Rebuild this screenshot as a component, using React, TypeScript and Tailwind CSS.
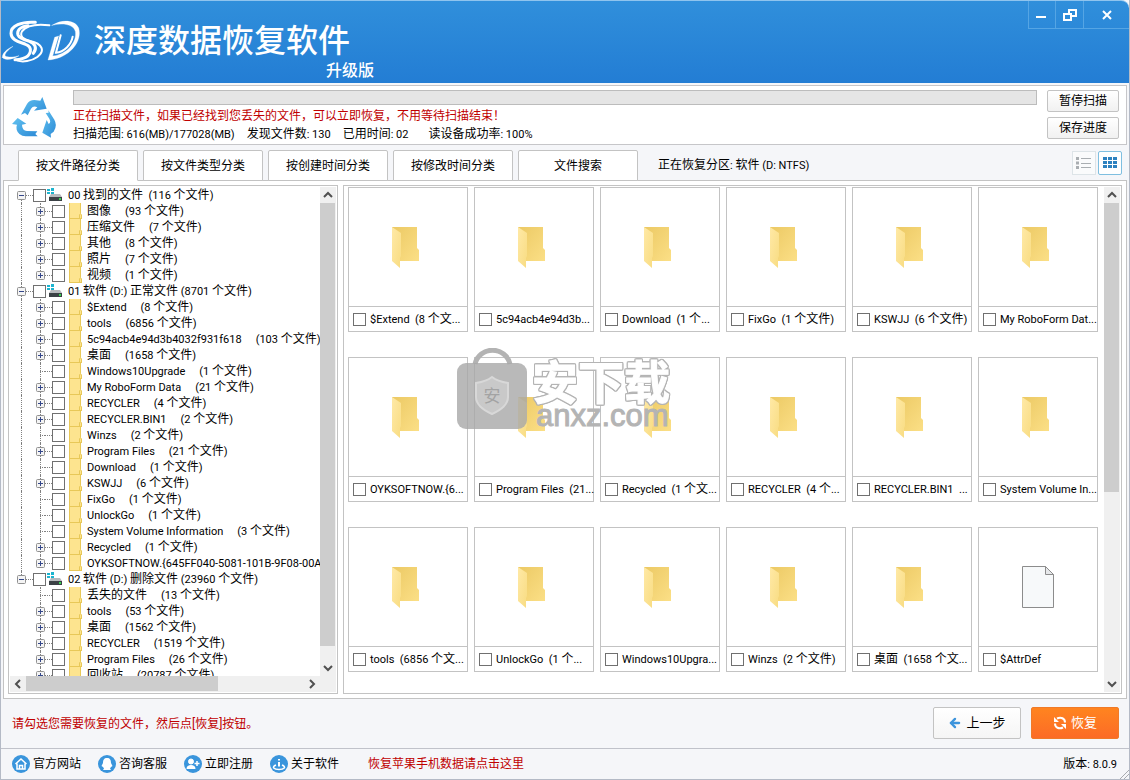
import type { ReactNode } from "react"
import { ArrowLeft } from "lucide-react"

type Folder = { name: string; count?: number; leaf?: boolean }
type Volume = { label: string; folders: Folder[] }

const volumes: Volume[] = [
  {
    label: "00 找到的文件  (116 个文件)",
    folders: [
      { name: "图像", count: 93 },
      { name: "压缩文件", count: 7 },
      { name: "其他", count: 8 },
      { name: "照片", count: 7 },
      { name: "视频", count: 1 },
    ],
  },
  {
    label: "01 软件 (D:) 正常文件 (8701 个文件)",
    folders: [
      { name: "$Extend", count: 8 },
      { name: "tools", count: 6856 },
      { name: "5c94acb4e94d3b4032f931f618", count: 103 },
      { name: "桌面", count: 1658 },
      { name: "Windows10Upgrade", count: 1, leaf: true },
      { name: "My RoboForm Data", count: 21 },
      { name: "RECYCLER", count: 4 },
      { name: "RECYCLER.BIN1", count: 2 },
      { name: "Winzs", count: 2, leaf: true },
      { name: "Program Files", count: 21 },
      { name: "Download", count: 1, leaf: true },
      { name: "KSWJJ", count: 6 },
      { name: "FixGo", count: 1, leaf: true },
      { name: "UnlockGo", count: 1, leaf: true },
      { name: "System Volume Information", count: 3, leaf: true },
      { name: "Recycled", count: 1 },
      { name: "OYKSOFTNOW.{645FF040-5081-101B-9F08-00A" },
    ],
  },
  {
    label: "02 软件 (D:) 删除文件 (23960 个文件)",
    folders: [
      { name: "丢失的文件", count: 13, leaf: true },
      { name: "tools", count: 53 },
      { name: "桌面", count: 1562 },
      { name: "RECYCLER", count: 1519 },
      { name: "Program Files", count: 26 },
      { name: "回收站", count: 20787 },
    ],
  },
]

const cards = [
  "$Extend  (8 个文...",
  "5c94acb4e94d3b...",
  "Download  (1 个...",
  "FixGo  (1 个文件)",
  "KSWJJ  (6 个文件)",
  "My RoboForm Dat...",
  "OYKSOFTNOW.{6...",
  "Program Files  (21...",
  "Recycled  (1 个文...",
  "RECYCLER  (4 个...",
  "RECYCLER.BIN1  ...",
  "System Volume In...",
  "tools  (6856 个文...",
  "UnlockGo  (1 个...",
  "Windows10Upgra...",
  "Winzs  (2 个文件)",
  "桌面  (1658 个文...",
  "$AttrDef",
]

const tabs = ["按文件路径分类", "按文件类型分类", "按创建时间分类", "按修改时间分类", "文件搜索"]

// Latin runs are set one pixel smaller than the Chinese around them
const Mixed = ({ text }: { text: string }) => (
  <>
    {text.split(/([\x20-\x7e]+)/).map((part, i) =>
      i % 2 ? (
        <span key={i} className="text-[11px]">
          {part}
        </span>
      ) : (
        part
      )
    )}
  </>
)

const Logo = () => (
  <svg viewBox="3 27 240 132" className="h-11 w-20 shrink-0" fill="none" stroke="#fff" strokeLinecap="round">
    <path d="M106 37C64 34 32 48 33 70c1 22 28 26 44 33 22 9 18 34-8 42-8 3-18 4-24 4" strokeWidth="9" />
    <path d="M148 46c-34-4-68 0-82 18-8 16 4 24 24 29 38 8 46 30 22 48-18 13-44 16-60 11" strokeWidth="6" />
    <path d="M84 47c-24 2-34 16-30 28 4 11 20 15 34 19 18 6 24 22 12 36" strokeWidth="9" />
    <path d="M7 142c0-12 12-24 32-33-14 10-24 20-24 28 10 7 30 4 42 0-16 11-44 16-50 5Z" fill="#fff" strokeWidth="1" />
    <path
      d="M156 46c28-18 68-18 80 8 12 42-30 92-92 96l20-68 12-4-18 60c44-4 74-44 68-74-6-22-38-26-70-18Z"
      fill="#fff"
      strokeWidth="1"
    />
    <path d="m182 76-14 52c24-2 46-24 50-48" strokeWidth="6" />
  </svg>
)

const RecycleIcon = () => (
  <svg viewBox="21 30 132 126" className="h-[42px] w-11">
    <defs>
      <linearGradient id="recycle" x1="0" y1="0" x2="1" y2="1">
        <stop offset="0" stopColor="#62c2f0" />
        <stop offset="1" stopColor="#2c8ad6" />
      </linearGradient>
    </defs>
    <g fill="url(#recycle)">
      <path d="M48 86 66 54q7-12 22-12l18 2 6-11 13 35-38 6 10-10q-12-6-19 4L68 88l-8-7Z" />
      <path d="m130 73 18 28q10 18-2 36l-9 7 1 11-26-15 13-38 6 12q8-4 2-16l-11-17 9-1Z" />
      <path d="M98 151H62q-22-2-27-20-2-8 1-15l-15-2 17-18 26 17-13 3q0 18 15 19l31 1-6 8Z" />
    </g>
  </svg>
)

const FolderIcon = () => (
  <svg viewBox="0 0 48 48" className="size-12">
    <defs>
      <linearGradient id="folder-back" x1="0" y1="0" x2="1" y2="1">
        <stop offset="0" stopColor="#ecc964" />
        <stop offset="1" stopColor="#fbdf86" />
      </linearGradient>
      <linearGradient id="folder-flap" x1="0" y1="0" x2="1" y2="1">
        <stop offset="0" stopColor="#ffe9a6" />
        <stop offset="1" stopColor="#f8dc82" />
      </linearGradient>
    </defs>
    <path d="M8 4h25v21l2 2v11H8Z" fill="url(#folder-back)" />
    <path d="m8 4 9 6v23l-1 2v10l-8-7Z" fill="url(#folder-flap)" />
  </svg>
)

const FileIcon = () => (
  <svg viewBox="0 0 48 48" className="size-12" stroke="#8c8c8c">
    <path d="M8.500 3.500h23l8 8v33h-31Z" fill="#f7f9fa" />
    <path d="M31.500 3.500v8h8Z" fill="#e6e8ea" />
  </svg>
)

const SmallFolder = () => (
  <svg viewBox="0 0 13 16" className="h-4 w-[13px] shrink-0">
    <path d="M0 0h11l1 10v6H0Z" fill="#fde48f" />
    <path d="M.500 0v16M11.500 0v10M10.500 16v-4l1-1.500 1 1.500v4M0 15.500h12" stroke="#e8c858" fill="none" />
  </svg>
)

const DriveIcon = () => (
  <svg viewBox="0 0 16 16" className="mx-px size-4 shrink-0">
    <path d="M0 2h3v2H0ZM4 1h3v3H4ZM0 5h3v2H0ZM4 5h3v3H4Z" fill="#1cb4cf" />
    <path d="M4 7h9l2 3H2Z" fill="#b7babd" />
    <path d="M2 10h13v4H2Z" fill="#3b4145" />
    <path d="M12 11h2v2h-2Z" fill="#39d353" />
  </svg>
)

const Check = () => (
  <input type="checkbox" className="size-[13px] shrink-0 appearance-none border border-[#707070] bg-white" />
)

const Expander = ({ open, leaf, line }: { open?: boolean; leaf?: boolean; line: string }) => (
  <span className="relative flex h-4 w-[9px] shrink-0 items-center">
    <span className={`absolute left-1 border-l border-dotted border-[#808080] ${line}`} />
    {leaf ? (
      <span className="ml-1 h-px w-[5px] border-t border-dotted border-[#808080]" />
    ) : (
      <svg viewBox="0 0 9 9" className="relative size-[9px]">
        <rect x=".5" y=".5" width="8" height="8" rx="1" fill="#f4f4f4" stroke="#919191" />
        <path d={open ? "M2 4.500h5" : "M2 4.500h5M4.500 2v5"} stroke="#34478a" />
      </svg>
    )}
  </span>
)

const Dots = () => <span className="h-px w-[7px] shrink-0 border-t border-dotted border-[#808080]" />

const Chevron = ({ d, label }: { d: string; label: string }) => (
  <button aria-label={label} className="flex size-4 shrink-0 items-center justify-center">
    <svg viewBox="0 0 10 10" className="size-[10px]" fill="none" stroke="#505050" strokeWidth="2">
      <path d={d} />
    </svg>
  </button>
)

const VerticalScroll = ({ thumb }: { thumb: string }) => (
  <div className="flex w-4 shrink-0 flex-col bg-[#f0f0f0]">
    <Chevron label="向上滚动" d="M1 7l4-4 4 4" />
    <div className="min-h-0 flex-1">
      <div className={`w-[15px] bg-[#cdcdcd] ${thumb}`} />
    </div>
    <Chevron label="向下滚动" d="M1 3l4 4 4-4" />
  </div>
)

const FileTree = () => (
  <div className="flex w-[330px] shrink-0 flex-col border border-[#c3c3c3] bg-white p-px">
    <div className="flex min-h-0 flex-1">
      <ul className="min-w-0 flex-1 overflow-hidden pl-[7px]">
        {volumes.map((volume, v) => {
          const last = v === volumes.length - 1
          return (
            <li key={volume.label}>
              <label className="flex h-4 items-center whitespace-pre">
                <Expander open line={v === 0 ? "top-2 bottom-0" : last ? "top-0 bottom-2" : "inset-y-0"} />
                <Dots />
                <Check />
                <DriveIcon />
                <span className="ml-1">
                  <Mixed text={volume.label} />
                </span>
              </label>
              <ul>
                {volume.folders.map((folder, f) => (
                  <li key={folder.name}>
                    <label className="flex h-4 items-center whitespace-pre">
                      <span className="mr-[10px] h-4 w-[9px] shrink-0 pl-1">
                        {!last && <span className="block h-4 w-px border-l border-dotted border-[#808080]" />}
                      </span>
                      <Expander
                        leaf={folder.leaf}
                        line={!last && f === volume.folders.length - 1 ? "top-0 bottom-2" : "inset-y-0"}
                      />
                      <Dots />
                      <Check />
                      <span className="mr-[5px] ml-1 flex shrink-0">
                        <SmallFolder />
                      </span>
                      <span>
                        <Mixed text={folder.name} />
                      </span>
                      {folder.count !== undefined && (
                        <span className="ml-[14px]">
                          <Mixed text={`(${folder.count} 个文件)`} />
                        </span>
                      )}
                    </label>
                  </li>
                ))}
              </ul>
            </li>
          )
        })}
      </ul>
      <VerticalScroll thumb="h-[97%]" />
    </div>
    <div className="flex h-4 shrink-0 bg-[#f0f0f0] pr-4">
      <Chevron label="向左滚动" d="M7 1L3 5l4 4" />
      <div className="flex flex-1">
        <div className="h-[15px] w-[69%] bg-[#cdcdcd]" />
      </div>
      <Chevron label="向右滚动" d="M3 1l4 4-4 4" />
    </div>
  </div>
)

const Watermark = () => (
  <div className="pointer-events-none absolute top-[162px] left-[113px] flex">
    <svg viewBox="0 0 70 82" className="h-[82px] w-[70px] shrink-0">
      <path d="M18 16a18 18 0 0 1 35 0" fill="none" stroke="#b3b3b3" strokeWidth="5" />
      <rect y="15" width="70" height="66" rx="9" fill="#a8a8a8" fillOpacity=".8" />
      <path d="M35 29c5 4 10 5 16 6v14c0 8-7 13-16 17-9-4-16-9-16-17V35c6-1 11-2 16-6Z" fill="#c9c9c9" stroke="#d8d8d8" strokeWidth="2" />
      <text x="35" y="54" textAnchor="middle" fontSize="17" fill="#a3a3a3">
        安
      </text>
    </svg>
    <div className="pt-3 pl-[5px]">
      <p className="h-[42px] text-[46px] leading-[46px] font-bold text-white [-webkit-text-stroke:1px_#fff] [filter:drop-shadow(1px_0_#b4b4b4)_drop-shadow(-1px_0_#b4b4b4)_drop-shadow(0_1px_#b4b4b4)_drop-shadow(0_-1px_#b4b4b4)]">
        安下载
      </p>
      <p className="pl-1 font-['Liberation_Sans',sans-serif] text-[31px] leading-[28px] text-[#b4b4b4] [-webkit-text-stroke:1px_#b4b4b4]">
        anxz.com
      </p>
    </div>
  </div>
)

const FileGrid = () => (
  <div className="relative flex min-w-0 flex-1 border border-[#c3c3c3] bg-white pr-px">
    <ul className="grid min-w-0 flex-1 auto-rows-min grid-cols-[repeat(auto-fill,120px)] gap-x-[6px] gap-y-[25px] overflow-hidden pt-px pl-1">
      {cards.map((card) => (
        <li key={card} className="h-[145px] border border-[#c3c3c3]">
          <label className="flex h-full flex-col">
            <span className="flex flex-1 items-center justify-center">
              {card === "$AttrDef" ? <FileIcon /> : <FolderIcon />}
            </span>
            <span className="flex h-[25px] items-center gap-1 border-t border-[#c3c3c3] pl-1">
              <Check />
              <span className="whitespace-pre">
                <Mixed text={card} />
              </span>
            </span>
          </label>
        </li>
      ))}
    </ul>
    <div className="flex py-px">
      <VerticalScroll thumb="h-[61%]" />
    </div>
    <Watermark />
  </div>
)

const FooterLink = ({ label, children }: { label: string; children: ReactNode }) => (
  <a href="#" className="flex items-center gap-[3px]">
    <svg viewBox="0 0 18 18" className="size-[18px]" fill="none" stroke="#fff">
      <circle cx="9" cy="9" r="9" fill="#3a95dc" stroke="none" />
      {children}
    </svg>
    {label}
  </a>
)

const smallButton =
  "h-[22px] w-[72px] rounded-xs border border-[#c3c3c3] bg-linear-to-b from-white to-[#f1f1f1] leading-5"

export default function App() {
  return (
    <div className="flex h-screen flex-col overflow-hidden border-x border-b border-[#b4bac6] bg-[#f5f6f9] font-[Roboto,'Noto_Sans_CJK_SC',sans-serif] text-[12px] leading-4 text-black">
      <header className="flex h-[83px] shrink-0 justify-between rounded-tr-lg border-t border-[#8fc4ee] bg-linear-to-b from-[#308fdb] to-[#237dd4] text-white">
        <div className="flex pt-[18px]">
          <Logo />
          <div className="ml-[13px]">
            <h1 className="text-[32px] leading-[44px] font-medium">深度数据恢复软件</h1>
            <p className="-mr-6 text-right text-[16px] leading-4 font-medium">升级版</p>
          </div>
        </div>
        <div className="flex h-7 border-b border-l border-[#55a5e4]">
          <button aria-label="最小化" className="w-[27px] border-r border-[#55a5e4] pl-[7px]">
            <span className="mt-1 block h-[2px] w-[10px] bg-white" />
          </button>
          <button aria-label="还原" className="flex w-7 items-center justify-center border-r border-[#55a5e4]">
            <svg viewBox="0 0 14 12" className="h-3 w-[14px]" fill="none" stroke="#fff" strokeWidth="2">
              <path d="M6 5V1h7v6H9M1 5h7v6H1Z" />
            </svg>
          </button>
          <button aria-label="关闭" className="flex w-[45px] items-center justify-center">
            <svg viewBox="0 0 10 10" className="size-[10px]" stroke="#fff" strokeWidth="2">
              <path d="M1 1l8 8M9 1L1 9" />
            </svg>
          </button>
        </div>
      </header>

      <section className="mx-[2px] mt-[2px] flex h-[60px] shrink-0 border border-[#c6c6c9] bg-white pr-[7px] pl-2">
        <div className="w-[61px] shrink-0 pt-[10px]">
          <RecycleIcon />
        </div>
        <div className="min-w-0 flex-1 pt-1">
          <div role="progressbar" aria-label="扫描进度" className="h-[15px] border border-[#bcbcbc] bg-[#e5e5e5]" />
          <p className="mt-[2px] leading-[18px] text-[#c00000]">
            正在扫描文件，如果已经找到您丢失的文件，可以立即恢复，不用等待扫描结束！
          </p>
          <p className="flex gap-3 leading-[18px]">
            <span>
              <Mixed text="扫描范围: 616(MB)/177028(MB)" />
            </span>
            <span>
              <Mixed text="发现文件数: 130" />
            </span>
            <span>
              <Mixed text="已用时间: 02" />
            </span>
            <span className="ml-2">
              <Mixed text="读设备成功率: 100%" />
            </span>
          </p>
        </div>
        <div className="ml-[10px] flex flex-col gap-[5px] pt-1">
          <button className={smallButton}>暂停扫描</button>
          <button className={smallButton}>保存进度</button>
        </div>
      </section>

      <nav className="z-10 mx-[2px] mt-[5px] flex h-[31px] shrink-0 gap-[5px] pl-[15px]">
        {tabs.map((tab, i) => (
          <button
            key={tab}
            className={`w-[120px] rounded-t-xs border border-[#c3c3c3] bg-white ${i === 0 ? "border-b-white" : ""}`}
          >
            {tab}
          </button>
        ))}
        <p className="ml-[15px] leading-[31px]">
          <Mixed text="正在恢复分区: 软件 (D: NTFS)" />
        </p>
        <div className="mt-px mr-[5px] ml-auto flex gap-[2px]">
          <button aria-label="列表视图" className="flex size-6 items-center justify-center border border-[#dde4e8] bg-[#fafbfc]">
            <svg viewBox="0 0 16 12" className="h-3 w-4" stroke="#a9aeb2" fill="none">
              <path d="M0 1.500h3M0 6h3M0 10.500h3" strokeWidth="3" />
              <path d="M5 1.500h10M5 6.500h10M5 10.500h10" />
            </svg>
          </button>
          <button aria-label="图标视图" className="flex size-6 items-center justify-center rounded-xs border border-[#7fbfe0] bg-white">
            <svg viewBox="0 0 14 12" className="h-3 w-[14px]" fill="#2e82c0">
              <path d="M0 0h4v3H0ZM5 0h4v3H5ZM10 0h4v3h-4ZM0 4h4v3H0ZM5 4h4v3H5ZM10 4h4v3h-4ZM0 8h4v3H0ZM5 8h4v3H5ZM10 8h4v3h-4Z" />
            </svg>
          </button>
        </div>
      </nav>

      <main className="mx-[2px] -mt-px flex min-h-0 flex-1 gap-[5px] border border-[#c3c3c3] bg-white p-1">
        <FileTree />
        <FileGrid />
      </main>

      <section className="flex h-[49px] shrink-0 items-center pr-[10px] pb-px pl-[11px]">
        <p className="pt-[2px] text-[#c00000]">请勾选您需要恢复的文件，然后点[恢复]按钮。</p>
        <div className="ml-auto flex gap-[10px] text-[13px]">
          <button className="flex h-8 w-[88px] items-center justify-center gap-1 rounded-xs border border-[#c3c3c3] bg-linear-to-b from-white to-[#f5f5f5]">
            <ArrowLeft className="size-[14px] text-[#3d94dc]" strokeWidth={4} />
            上一步
          </button>
          <button className="flex h-8 w-[88px] items-center justify-center gap-1 rounded-xs border border-[#f07a28] bg-linear-to-b from-[#ff841f] to-[#fc6b26] text-white">
            <svg viewBox="0 0 14 14" className="size-[14px]" fill="none" stroke="#fff" strokeWidth="2">
              <path d="M4 2.500c4-2 8 0 8 4M10 11.500c-4 2-8 0-8-4" />
              <path d="M1 1v5h5ZM13 13V8H8Z" fill="#fff" stroke="none" />
            </svg>
            恢复
          </button>
        </div>
      </section>

      <footer className="flex h-[31px] shrink-0 items-center gap-[17px] border-t border-[#c0c2ca] pl-[11px]">
        <FooterLink label="官方网站">
          <path d="M3.500 9 9 4l5.500 5M5 8.500V14h8V8.500M7.500 14v-3.500h3V14" strokeWidth="1.500" />
        </FooterLink>
        <FooterLink label="咨询客服">
          <path d="M9 3c3 0 4 2 4 5l1.500 3-1.500 1-1 1.500 1 1.500H5l1-1.500L5 12l-1.500-1L5 8c0-3 1-5 4-5Z" fill="#fff" stroke="none" />
        </FooterLink>
        <FooterLink label="立即注册">
          <circle cx="7" cy="6.500" r="2.500" fill="#fff" />
          <path d="M2.500 14c0-3 2-4 4.500-4s4.500 1 4.500 4Z" fill="#fff" stroke="none" />
          <path d="M13 6v5M10.500 8.500h5" strokeWidth="1.500" />
        </FooterLink>
        <FooterLink label="关于软件">
          <path d="M9 4v1.500M9 7v4.500" strokeWidth="2" />
          <path d="M6 10c-5 2-2 4.500 3 4.500s8-2.500 3-4.500" strokeWidth="1.500" />
        </FooterLink>
        <a href="#" className="ml-3 text-[#c00000]">
          恢复苹果手机数据请点击这里
        </a>
        <p className="mr-[2px] ml-auto">
          <Mixed text="版本: 8.0.9" />
        </p>
        <svg viewBox="0 0 10 10" className="-ml-[17px] size-[10px] self-end" stroke="#a8abb0">
          <path d="M1 10l9-9M5 10l5-5" />
        </svg>
      </footer>
    </div>
  )
}
